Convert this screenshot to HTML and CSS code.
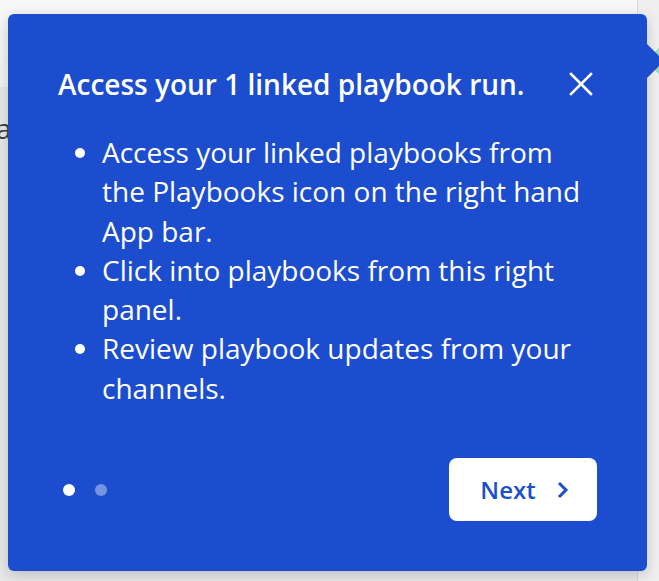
FILE: index.html
```html
<!DOCTYPE html>
<html>
<head>
<meta charset="utf-8">
<link rel="stylesheet" href="styles.css">
</head>
<body>
<div class="backdrop">
  <div class="main">
    <div class="topbar"></div>
    <div class="content"><span class="peek">a</span></div>
  </div>
  <div class="sidebar"></div>
</div>

<div class="pulse"></div>
<section class="tour">
  <span class="tip-arrow"></span>
  <header class="tour-head">
    <h2 class="tour-title">Access your 1 linked playbook run.</h2>
    <button class="close" aria-label="Close">
      <svg width="24" height="24" viewBox="0 0 24 24"><path d="M2 2 L22 22 M22 2 L2 22" stroke="#fff" stroke-width="2.6" stroke-linecap="square" fill="none"/></svg>
    </button>
  </header>
  <ul class="tour-list">
    <li>Access your linked playbooks from the Playbooks icon on the right hand App bar.</li>
    <li>Click into playbooks from this right panel.</li>
    <li>Review playbook updates from your channels.</li>
  </ul>
  <footer class="tour-foot">
    <div class="dots"><span class="dot active"></span><span class="dot"></span></div>
    <button class="next">Next
      <svg width="14" height="18" viewBox="0 0 14 18"><path d="M3 2 L10 9 L3 16" stroke="#1c4fcf" stroke-width="3" fill="none"/></svg>
    </button>
  </footer>
</section>
</body>
</html>
```
FILE: styles.css
```css
html, body {
  margin: 0;
  padding: 0;
  width: 659px;
  height: 581px;
  overflow: hidden;
  font-family: "Open Sans", "Noto Sans", sans-serif;
}
.backdrop {
  display: flex;
  width: 659px;
  height: 581px;
  background: #f3f3f3;
}
.main {
  flex: 0 0 637px;
  display: flex;
  flex-direction: column;
}
.topbar {
  height: 87px;
  background: linear-gradient(#f7f7f7, #f2f2f2);
}
.content {
  flex: 1;
  background: #e8e8e8;
  padding-top: 22px;
}
.peek {
  display: block;
  margin-left: -4px;
  font-size: 28px;
  color: #3a3a3a;
}
.sidebar {
  flex: 1;
  border-left: 1px solid #d6d6d6;
  background: #efefef;
}
.pulse {
  position: absolute;
  left: 652px;
  top: 46px;
  width: 30px;
  height: 30px;
  background: #a3d9c0;
  transform: rotate(45deg);
}
.tour {
  position: absolute;
  left: 8px;
  top: 14px;
  width: 639px;
  height: 557px;
  box-sizing: border-box;
  padding: 50px 50px 50px 50px;
  background: #1b4dce;
  border-radius: 6px;
  box-shadow: 0 4px 14px rgba(0,0,0,0.18);
  color: #fff;
  display: flex;
  flex-direction: column;
}
.tip-arrow {
  position: absolute;
  left: 100%;
  top: 30px;
  width: 0;
  height: 0;
  border-top: 17px solid transparent;
  border-bottom: 17px solid transparent;
  border-left: 17px solid #1b4dce;
}
.tour-head {
  display: flex;
  align-items: center;
  justify-content: space-between;
}
.tour-title {
  margin: 0;
  font-size: 28px;
  font-weight: 600;
  line-height: 40px;
}
.close {
  border: 0;
  background: none;
  padding: 0;
  margin-right: 4px;
  width: 24px;
  height: 24px;
  display: flex;
}
.tour-list {
  margin: 29px 0 0 0;
  padding: 0 10px 0 44px;
  font-size: 28px;
  line-height: 39.3px;
}
.tour-foot {
  margin-top: auto;
  display: flex;
  align-items: center;
  justify-content: space-between;
}
.dots {
  display: flex;
  gap: 20px;
  padding-left: 5px;
}
.dot {
  width: 12px;
  height: 12px;
  border-radius: 50%;
  background: rgba(255,255,255,0.4);
}
.dot.active {
  background: #fff;
}
.next {
  width: 148px;
  height: 63px;
  border: 0;
  border-radius: 8px;
  background: #fff;
  color: #1c4fcf;
  font-family: "Open Sans", "Noto Sans", sans-serif;
  font-size: 24px;
  font-weight: 600;
  display: flex;
  align-items: center;
  justify-content: center;
  gap: 20px;
  padding: 0 0 0 4px;
}
```
